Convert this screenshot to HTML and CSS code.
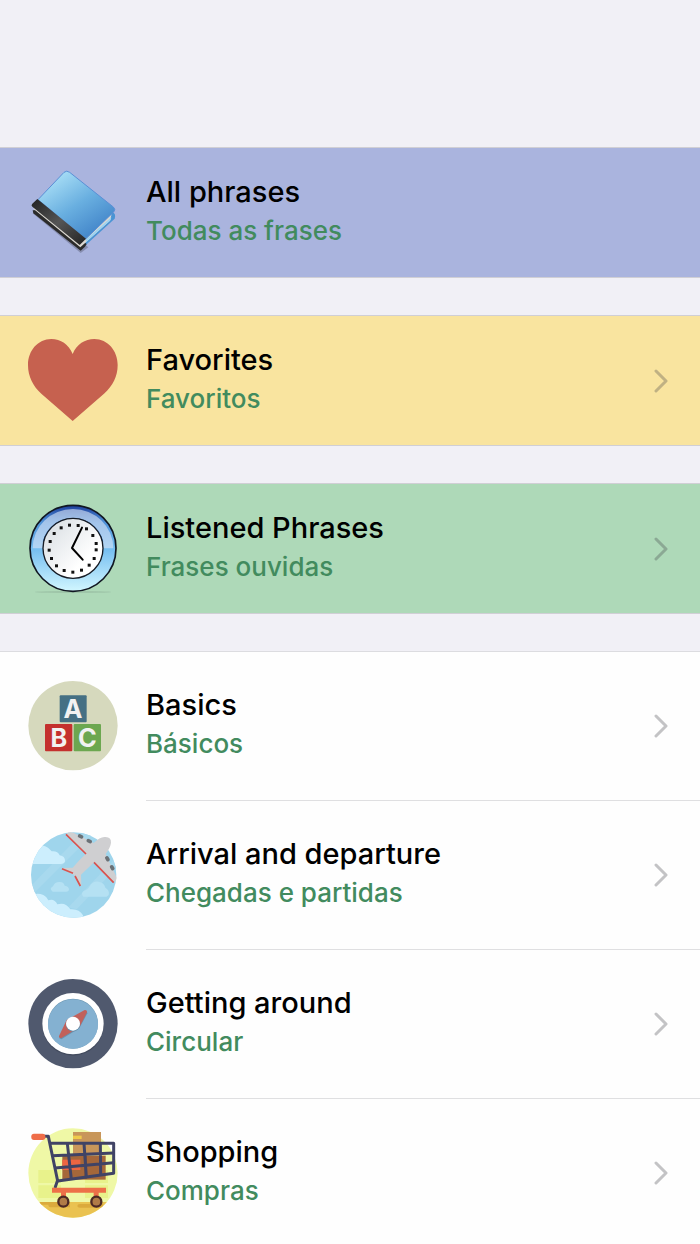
FILE: index.html
```html
<!DOCTYPE html>
<html lang="en">
<head>
  <meta charset="UTF-8">
  <meta name="viewport" content="width=device-width, initial-scale=1.0">
  <title>Phrasebook</title>
  <link rel="stylesheet" href="styles.css">
</head>
<body>

  <main class="phrasebook">

    <a class="row card card-all" href="#all">
      <!-- Book -->
      <svg class="icon" viewBox="24 24 270 270" aria-hidden="true">
        <defs>
          <linearGradient id="cover" x1="0.2" y1="0.1" x2="0.8" y2="0.9">
            <stop offset="0" stop-color="#a5dcf5"/>
            <stop offset="0.5" stop-color="#69afe0"/>
            <stop offset="1" stop-color="#4285c9"/>
          </linearGradient>
          <linearGradient id="spine" x1="0" y1="0" x2="1" y2="1">
            <stop offset="0" stop-color="#222"/>
            <stop offset="0.5" stop-color="#555"/>
            <stop offset="1" stop-color="#222"/>
          </linearGradient>
        </defs>
        <path d="M38 160 L182 279 L205 262 L180 240 L50 145Z" fill="#6e7390" opacity="0.6"/>
        <path d="M190 262 L284 176 Q289 160 276 156 L180 240Z" fill="#4a94d4"/>
        <path d="M38 151 L60 150 L200 252 L195 260 L182 272 L40 160Z" fill="#2b2b2b"/>
        <path d="M40 146 L181 262 L270 182 L275 162 L180 240 L60 130Z" fill="#dcd9d2"/>
        <path d="M198 246 L272 180 L274 172 L198 238Z" fill="#9bd3f2"/>
        <path d="M132 37 Q140 30 149 37 L280 141 Q288 148 281 156 L197 237 L54 119Z" fill="url(#cover)" stroke="#5a8fd6" stroke-width="3"/>
        <path d="M52 117 L198 236 L179 255 L37 140 Q32 135 37 131Z" fill="url(#spine)"/>
      </svg>
      <span class="text">
        <span class="title">All phrases</span>
        <span class="subtitle">Todas as frases</span>
      </span>
    </a>

    <a class="row card card-favorites" href="#favorites">
      <!-- Heart -->
      <svg class="icon" viewBox="24 18 270 270" aria-hidden="true">
        <path d="M158 72 C146 43 122 27 94 27 C54 27 24 62 24 105 C24 139 39 169 64 191 L158 273 L252 191 C278 168 293 139 293 105 C293 62 263 27 223 27 C195 27 170 43 158 72Z" fill="#c6614f"/>
      </svg>
      <span class="text">
        <span class="title">Favorites</span>
        <span class="subtitle">Favoritos</span>
      </span>
      <svg class="chevron" viewBox="0 0 14 24" aria-hidden="true"><path d="M2 2 L12 12 L2 22"/></svg>
    </a>

    <a class="row card card-listened" href="#listened">
      <!-- Clock -->
      <svg class="icon" viewBox="24 27 270 270" aria-hidden="true">
        <defs>
          <linearGradient id="rim" x1="0" y1="0" x2="0" y2="1">
            <stop offset="0" stop-color="#1e3f9c"/>
            <stop offset="0.2" stop-color="#4f92d8"/>
            <stop offset="0.5" stop-color="#74bdf0"/>
            <stop offset="1" stop-color="#d2f7ff"/>
          </linearGradient>
          <linearGradient id="face" x1="0" y1="0" x2="1" y2="1">
            <stop offset="0" stop-color="#d5dbe0"/>
            <stop offset="0.7" stop-color="#ffffff"/>
          </linearGradient>
        </defs>
        <ellipse cx="159" cy="291" rx="115" ry="3" fill="#7f9c88" opacity="0.3"/>
        <circle cx="159" cy="160" r="129" fill="url(#rim)" stroke="#111722" stroke-width="5"/>
        <path d="M38 160 A121 118 0 0 1 280 160 L250 160 A91 91 0 0 0 68 160Z" fill="#dce6f6" opacity="0.6"/>
        <path d="M71 140 A91 91 0 0 1 247 140" fill="none" stroke="#2d68ae" stroke-width="6"/>
        <circle cx="159" cy="160" r="90" fill="url(#face)" stroke="#161b24" stroke-width="4"/>
        <g fill="#111">
          <rect x="144" y="86" width="9" height="9"/><rect x="170" y="87" width="9" height="9"/>
          <rect x="195" y="97" width="9" height="9"/><rect x="214" y="117" width="9" height="9"/>
          <rect x="224" y="141" width="9" height="9"/><rect x="224" y="160" width="9" height="9"/>
          <rect x="218" y="186" width="9" height="9"/><rect x="203" y="206" width="9" height="9"/>
          <rect x="180" y="221" width="9" height="9"/><rect x="154" y="227" width="9" height="9"/>
          <rect x="128" y="222" width="9" height="9"/><rect x="105" y="208" width="9" height="9"/>
          <rect x="90" y="186" width="9" height="9"/><rect x="83" y="161" width="9" height="9"/>
          <rect x="86" y="135" width="9" height="9"/><rect x="98" y="111" width="9" height="9"/>
          <rect x="119" y="94" width="9" height="9"/>
        </g>
        <path d="M186 98 L156 159 L188 194" fill="none" stroke="#000" stroke-width="6" stroke-linecap="round" stroke-linejoin="round"/>
      </svg>
      <span class="text">
        <span class="title">Listened Phrases</span>
        <span class="subtitle">Frases ouvidas</span>
      </span>
      <svg class="chevron" viewBox="0 0 14 24" aria-hidden="true"><path d="M2 2 L12 12 L2 22"/></svg>
    </a>

    <nav class="categories">

      <a class="row" href="#basics">
        <!-- Letter blocks -->
        <svg class="icon" viewBox="24 26 270 270" aria-hidden="true">
          <circle cx="159" cy="160" r="134" fill="#d6d9bd"/>
          <rect x="119" y="69" width="81" height="81" rx="3" fill="#457084"/>
          <rect x="75" y="155" width="82" height="82" rx="3" fill="#c4302e"/>
          <rect x="161" y="155" width="82" height="82" rx="3" fill="#6ca750"/>
          <g class="block-letters">
            <text x="159" y="137">A</text>
            <text x="117" y="223">B</text>
            <text x="202" y="223">C</text>
          </g>
        </svg>
        <span class="text">
          <span class="title">Basics</span>
          <span class="subtitle">Básicos</span>
        </span>
        <svg class="chevron" viewBox="0 0 14 24" aria-hidden="true"><path d="M2 2 L12 12 L2 22"/></svg>
      </a>

      <a class="row" href="#arrival">
        <!-- Plane -->
        <svg class="icon" viewBox="24 24 270 270" aria-hidden="true">
          <defs>
            <clipPath id="sky"><circle cx="161" cy="159" r="128"/></clipPath>
          </defs>
          <g clip-path="url(#sky)">
            <rect x="30" y="28" width="262" height="262" fill="#9fd5ec"/>
            <path d="M35 190 L190 30 L225 30 L45 210Z M145 256 L285 110 L292 135 L170 262Z" fill="#a8d9ee"/>
            <path d="M30 126 L30 70 Q78 62 95 88 Q113 86 119 100 Q136 103 135 118 Q133 126 122 126Z" fill="#cceefd"/>
            <path d="M98 209 Q86 200 99 193 Q104 179 120 180 Q132 181 134 191 Q148 193 147 204 Q145 209 139 209Z" fill="#b5e1f3"/>
            <path d="M190 224 Q181 213 192 206 Q205 203 209 193 Q217 177 236 179 Q253 182 256 197 Q270 205 266 219 L260 224Z" fill="#b5e1f3"/>
            <path d="M30 222 Q50 210 70 219 Q82 225 85 235 Q103 229 112 247 Q137 239 151 262 Q178 260 189 280 L189 295 L30 295Z" fill="#cceefd"/>
          </g>
          <path d="M139 35 Q148 28 160 32 L221 63 Q242 42 257 45 Q274 46 273 62 Q272 75 257 96 L289 164 Q292 174 281 181 L222 121 L183 158 L184 190 L179 192 L163 159 L127 142 L128 138 L158 137 Q176 116 197 96Z" fill="#cfcfd1"/>
          <g fill="#6b7176">
            <rect x="173" y="38" width="17" height="11" rx="5" transform="rotate(25 182 44)"/>
            <rect x="199" y="52" width="17" height="11" rx="5" transform="rotate(25 208 58)"/>
            <rect x="253" y="105" width="17" height="11" rx="5" transform="rotate(60 262 111)"/>
            <rect x="268" y="131" width="17" height="11" rx="5" transform="rotate(60 276 137)"/>
          </g>
          <path d="M138 37 L198 96 M222 121 L281 182 M126 140 L159 154 M165 162 L181 192" fill="none" stroke="#d9534f" stroke-width="5"/>
        </svg>
        <span class="text">
          <span class="title">Arrival and departure</span>
          <span class="subtitle">Chegadas e partidas</span>
        </span>
        <svg class="chevron" viewBox="0 0 14 24" aria-hidden="true"><path d="M2 2 L12 12 L2 22"/></svg>
      </a>

      <a class="row" href="#around">
        <!-- Compass -->
        <svg class="icon" viewBox="24 27 270 270" aria-hidden="true">
          <circle cx="159" cy="161" r="134" fill="#50596e"/>
          <circle cx="159" cy="165" r="92" fill="#434b5e"/>
          <circle cx="159" cy="161" r="92" fill="#fff"/>
          <circle cx="159" cy="161" r="75" fill="#709ab5"/>
          <path d="M84 163 A75 75 0 0 1 234 163 A75 73 0 0 1 84 163Z" fill="#84b1d1"/>
          <path d="M118 205 L140 151 L198 124 Q202 125 202 130 L178 175 L124 208Z" fill="#6991ad"/>
          <path d="M117 198 L140 150 L194 120 Q202 119 201 127 L178 172 L124 204 Q116 205 117 198Z" fill="#c1615b"/>
          <circle cx="159" cy="164" r="21" fill="#6991ad"/>
          <circle cx="159" cy="161" r="21" fill="#fff"/>
        </svg>
        <span class="text">
          <span class="title">Getting around</span>
          <span class="subtitle">Circular</span>
        </span>
        <svg class="chevron" viewBox="0 0 14 24" aria-hidden="true"><path d="M2 2 L12 12 L2 22"/></svg>
      </a>

      <a class="row" href="#shopping">
        <!-- Shopping cart -->
        <svg class="icon" viewBox="24 24 270 270" aria-hidden="true">
          <defs>
            <clipPath id="floor"><circle cx="159" cy="159" r="134"/></clipPath>
          </defs>
          <g clip-path="url(#floor)">
            <rect x="24" y="24" width="270" height="270" fill="#eff8a6"/>
            <path d="M55 150 H123 V189 H55Z M55 196 H123 V234 H55Z M195 150 H264 V189 H195Z M195 196 H264 V234 H195Z" fill="#e8f28b"/>
            <rect x="24" y="246" width="270" height="50" fill="#eac251"/>
            <path d="M60 246 H150 V262 H95 Q85 262 85 254 H60Z M180 252 H250 V263 H180 Q172 263 172 258 Q172 252 180 252Z" fill="#dbaa3d"/>
          </g>
          <rect x="159" y="36" width="84" height="70" fill="#c8965a"/>
          <rect x="159" y="47" width="26" height="10" fill="#f0cb4b"/>
          <rect x="127" y="107" width="130" height="72" fill="#a5673a"/>
          <rect x="193" y="107" width="8" height="70" fill="#8a5230"/>
          <rect x="127" y="119" width="54" height="31" fill="#ed6542"/>
          <g fill="none" stroke="#404365" stroke-width="9" stroke-linejoin="round">
            <path d="M72 49 L85 49 L113 183 L281 160 L281 70 L90 70"/>
            <path d="M97 107 L281 99 M105 144 L281 128 M142 70 L154 178 M192 70 L199 171 M241 70 L242 166"/>
            <path d="M113 180 L105 204"/>
          </g>
          <rect x="34" y="41" width="42" height="19" rx="8" fill="#ef6d49"/>
          <path d="M96 203 H258 V218 H236 V238 H221 V218 H138 V238 H123 V218 H96Z" fill="#ed7048"/>
          <g fill="#b07b47" stroke="#4c2925" stroke-width="7">
            <circle cx="130" cy="245" r="15"/>
            <circle cx="229" cy="245" r="15"/>
          </g>
        </svg>
        <span class="text">
          <span class="title">Shopping</span>
          <span class="subtitle">Compras</span>
        </span>
        <svg class="chevron" viewBox="0 0 14 24" aria-hidden="true"><path d="M2 2 L12 12 L2 22"/></svg>
      </a>

    </nav>
  </main>

</body>
</html>
```

FILE: styles.css
```css
* {
  margin: 0;
  padding: 0;
  box-sizing: border-box;
}

body {
  font-family: Inter, "Liberation Sans", sans-serif;
  background: #f1f0f6;
  color: #000;
}

.phrasebook {
  display: flex;
  flex-direction: column;
  padding-top: 147px;
}

.row {
  display: flex;
  align-items: center;
  gap: 28px;
  padding: 29px 32px 29px 28px;
  color: inherit;
  text-decoration: none;
}

/* Coloured rows on top */
.card {
  padding-top: 20px;
  padding-bottom: 19px;
  border-top: 1px solid rgba(60, 60, 67, 0.18);
  border-bottom: 1px solid rgba(60, 60, 67, 0.18);
  background-clip: padding-box;
  margin-bottom: 37px;
}

.card-all {
  background-color: #aab4de;
}

.card-favorites {
  background-color: #f9e49f;
}

.card-listened {
  background-color: #aed9b8;
}

.icon {
  width: 90px;
  height: 90px;
  flex-shrink: 0;
}

.block-letters {
  fill: #f2f2f2;
  font-family: Inter, "Liberation Sans", sans-serif;
  font-size: 76px;
  font-weight: 700;
  text-anchor: middle;
}

.text {
  display: flex;
  flex-direction: column;
  flex: 1;
  padding-bottom: 4px;
}

.title {
  font-size: 29px;
  font-weight: 500;
  line-height: 40px;
}

.subtitle {
  font-size: 26px;
  font-weight: 500;
  line-height: 38px;
  color: #428b5e;
}

.chevron {
  width: 14px;
  height: 24px;
  fill: none;
  stroke: rgba(60, 60, 67, 0.3);
  stroke-width: 3;
  stroke-linecap: round;
  stroke-linejoin: round;
}

/* White list with separators that start under the text */
.categories {
  background: #fefefe;
  border-top: 1px solid #dcdce0;
}

.categories .row + .row {
  background: linear-gradient(#dfdfe1, #dfdfe1) 146px 0 / 100% 1px no-repeat;
  padding-top: 30px;
}

.categories .row:last-child {
  padding-bottom: 26px;
}
```
